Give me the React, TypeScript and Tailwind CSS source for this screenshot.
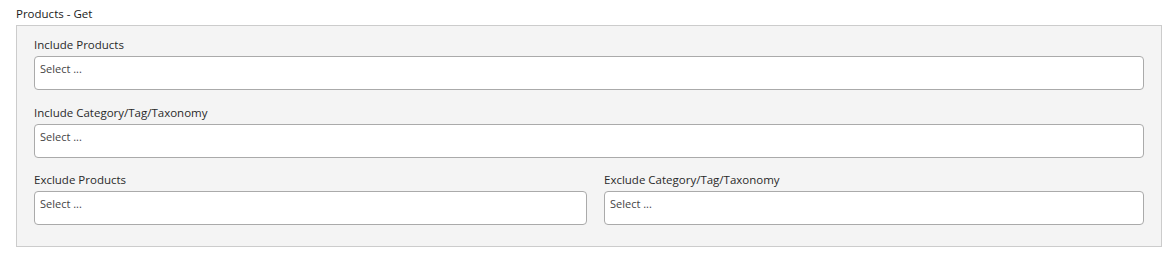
const font = { fontFamily: '"Open Sans", "Noto Sans", sans-serif' };

function Field({ label }: { label: string }) {
  return (
    <div className="flex flex-col">
      <label className="text-[11.5px] leading-[16px] font-medium text-[#2a2a2a] mb-[3px]">{label}</label>
      <div className="h-[34px] rounded-[4px] border border-[#aaa] bg-white px-[5px] pt-[4px]">
        <span className="block text-[11px] leading-[16px] text-[#444]">Select ...</span>
      </div>
    </div>
  );
}

export default function App() {
  return (
    <div className="bg-white w-[1172px] h-[256px] pl-[16px] pr-[10px] pt-[6px]" style={font}>
      <div className="text-[11.5px] leading-[16px] font-medium text-[#1a1a1a] mb-[3px]">Products - Get</div>
      <div className="border border-[#ccc] bg-[#f4f4f4] px-[17px] pt-[11px] pb-[21px] flex flex-col">
        <Field label="Include Products" />
        <div className="mt-[15px]">
          <Field label="Include Category/Tag/Taxonomy" />
        </div>
        <div className="mt-[14px] grid grid-cols-[553px_1fr] gap-[17px]">
          <Field label="Exclude Products" />
          <Field label="Exclude Category/Tag/Taxonomy" />
        </div>
      </div>
    </div>
  );
}
